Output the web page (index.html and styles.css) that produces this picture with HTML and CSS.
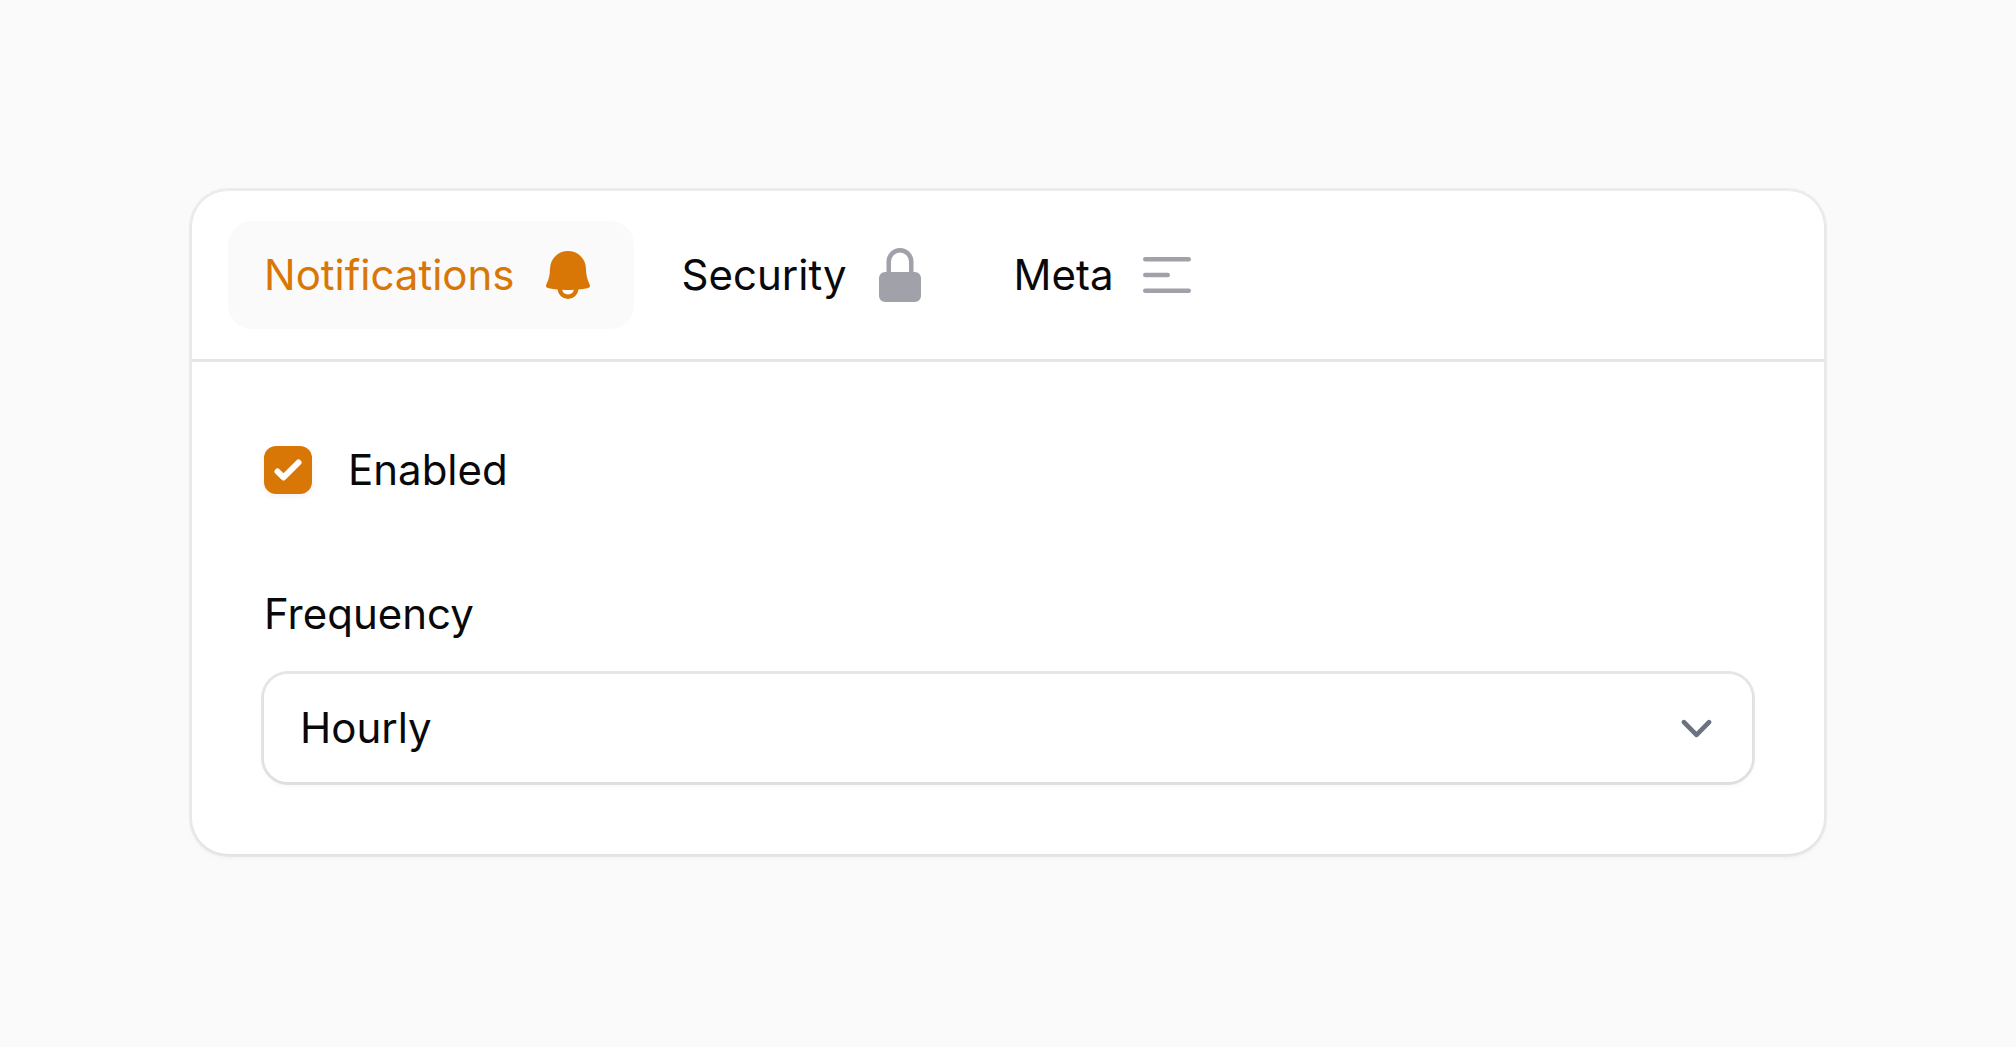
FILE: index.html
```html
<!DOCTYPE html>
<html lang="en">
<head>
<meta charset="utf-8">
<meta name="viewport" content="width=device-width, initial-scale=1">
<title>Notification settings</title>
<link rel="stylesheet" href="styles.css">
</head>
<body>
<main class="page">
  <section class="card">
    <div class="tabs" role="tablist" aria-label="Settings">
      <button class="tab tab-active" type="button" role="tab" id="tab-notifications" aria-selected="true" aria-controls="panel">
        <span>Notifications</span>
        <svg class="tab-icon" viewBox="0 0 20 20" fill="currentColor" aria-hidden="true"><path fill-rule="evenodd" clip-rule="evenodd" d="M10 2a6 6 0 0 0-6 6c0 1.887-.454 3.665-1.257 5.234a.75.75 0 0 0 .515 1.076 32.91 32.91 0 0 0 3.256.508 3.5 3.5 0 0 0 6.972 0 32.903 32.903 0 0 0 3.256-.508.75.75 0 0 0 .515-1.076A11.448 11.448 0 0 1 16 8a6 6 0 0 0-6-6ZM8.05 14.943a33.54 33.54 0 0 0 3.9 0 2 2 0 0 1-3.9 0Z"/></svg>
      </button>
      <button class="tab" type="button" role="tab" aria-selected="false">
        <span>Security</span>
        <svg class="tab-icon" viewBox="0 0 20 20" fill="currentColor" aria-hidden="true"><path fill-rule="evenodd" clip-rule="evenodd" d="M10 1a4.5 4.5 0 0 0-4.5 4.5V9H5a2 2 0 0 0-2 2v6a2 2 0 0 0 2 2h10a2 2 0 0 0 2-2v-6a2 2 0 0 0-2-2h-.5V5.5A4.5 4.5 0 0 0 10 1Zm3 8V5.5a3 3 0 1 0-6 0V9h6Z"/></svg>
      </button>
      <button class="tab" type="button" role="tab" aria-selected="false">
        <span>Meta</span>
        <svg class="tab-icon" viewBox="0 0 20 20" fill="none" stroke="currentColor" stroke-width="1.5" stroke-linecap="round" aria-hidden="true"><path d="M2.75 4.75h14.5M2.75 10h7.5M2.75 15.25h14.5"/></svg>
      </button>
    </div>
    <form class="panel" id="panel" role="tabpanel" aria-labelledby="tab-notifications">
      <label class="check-field">
        <span class="check">
          <input class="check-input" type="checkbox" checked>
          <svg class="check-mark" viewBox="0 0 16 16" fill="currentColor" aria-hidden="true"><path d="M12.207 4.793a1 1 0 0 1 0 1.414l-5 5a1 1 0 0 1-1.414 0l-2-2a1 1 0 0 1 1.414-1.414L6.5 9.086l4.293-4.293a1 1 0 0 1 1.414 0Z"/></svg>
        </span>
        <span>Enabled</span>
      </label>
      <div class="field">
        <label for="frequency">Frequency</label>
        <div class="select">
          <select class="select-input" id="frequency">
            <option>Hourly</option>
            <option>Daily</option>
            <option>Weekly</option>
          </select>
          <svg class="select-arrow" viewBox="0 0 20 20" fill="none" stroke="currentColor" stroke-width="1.5" stroke-linecap="round" stroke-linejoin="round" aria-hidden="true"><path d="M6 8l4 4 4-4"/></svg>
        </div>
      </div>
    </form>
  </section>
</main>
</body>
</html>
```
FILE: styles.css
```css
*,
*::before,
*::after {
  box-sizing: border-box;
}

body {
  margin: 0;
  background: #fafafa;
  color: #09090b;
  font: 400 42px/72px Inter, "Liberation Sans", sans-serif;
}

button,
select {
  font: inherit;
  color: inherit;
}

.page {
  padding: 191px 192px;
}

.card {
  background: #fff;
  border-radius: 36px;
  box-shadow: 0 0 0 3px rgba(9, 9, 11, 0.05), 0 3px 6px rgba(0, 0, 0, 0.05);
}

.tabs {
  display: flex;
  gap: 12px;
  padding: 30px 36px;
  border-bottom: 3px solid #e5e5e5;
}

.tab {
  display: flex;
  align-items: center;
  gap: 23px;
  padding: 24px 36px;
  border: 0;
  border-radius: 24px;
  background: transparent;
  line-height: 60px;
  cursor: pointer;
}

.tab-active {
  background: #fafafa;
  color: #d97706;
}

.tab-icon {
  width: 60px;
  height: 60px;
  color: #a1a1aa;
}

.tab-active .tab-icon {
  color: inherit;
}

.panel {
  display: grid;
  gap: 72px;
  padding: 72px;
}

.check-field {
  display: flex;
  align-items: center;
  gap: 36px;
  justify-self: start;
}

.check {
  display: grid;
}

.check-input,
.check-mark {
  grid-area: 1 / 1;
  width: 48px;
  height: 48px;
}

.check-input {
  appearance: none;
  margin: 0;
  border-radius: 12px;
  background: #fff;
  box-shadow: 0 0 0 3px rgba(9, 9, 11, 0.1);
}

.check-input:checked {
  background: #d97706;
  box-shadow: 0 3px 6px rgba(0, 0, 0, 0.05);
}

.check-mark {
  color: #fff;
  pointer-events: none;
}

.field {
  display: grid;
  gap: 24px;
}

.select {
  display: grid;
  align-items: center;
  border-radius: 24px;
  box-shadow: 0 0 0 3px rgba(9, 9, 11, 0.1), 0 3px 6px rgba(0, 0, 0, 0.05);
}

.select-input {
  grid-area: 1 / 1;
  appearance: none;
  width: 100%;
  padding: 18px 108px 18px 36px;
  border: 0;
  border-radius: 24px;
  background: #fff;
  line-height: 72px;
}

.select-arrow {
  grid-area: 1 / 1;
  justify-self: end;
  width: 63px;
  height: 63px;
  margin-right: 24px;
  color: #6b7280;
  pointer-events: none;
}
```
